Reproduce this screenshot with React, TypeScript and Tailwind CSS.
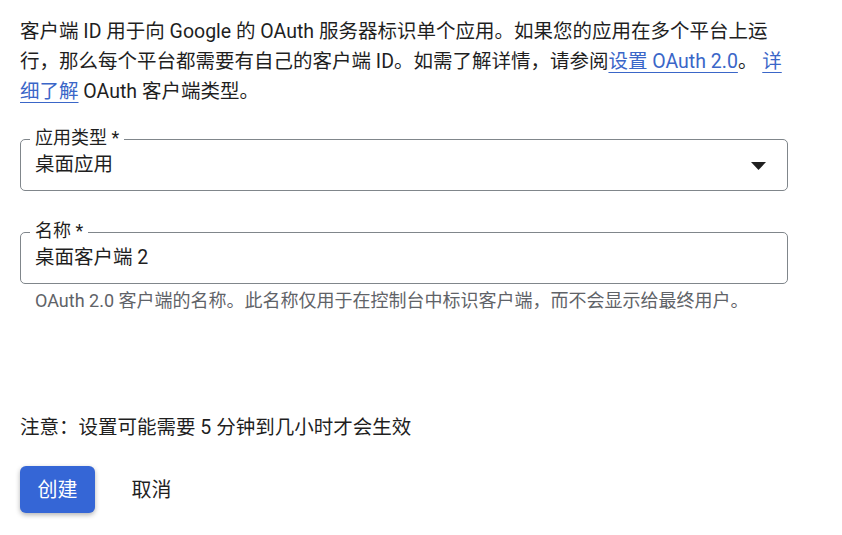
import React from "react";

const font = { fontFamily: 'Roboto, "Noto Sans CJK SC", sans-serif' };

function Field({ label, value, select }: { label: string; value: string; select?: boolean }) {
  return (
    <div className="relative h-[52px] w-[768px] rounded-[5px] border border-[#80868b] flex items-center pl-[14px] pr-[21px]">
      <span className="absolute left-[9px] top-[-14px] bg-white px-[5px] text-[18px] leading-[24px] text-[#1f1f1f]">
        {label}
      </span>
      <span className="flex-1 text-[19.5px] leading-[26px] text-[#1f1f1f]">{value}</span>
      {select && (
        <svg width="15" height="8" viewBox="0 0 15 8" className="mt-[1px]">
          <path d="M0 0 L15 0 L7.5 8 Z" fill="#1f1f1f" />
        </svg>
      )}
    </div>
  );
}

export default function App() {
  return (
    <div className="min-h-[535px] w-[842px] bg-white px-5" style={font}>
      <p className="pt-[17px] text-[19.5px] leading-[30px] text-[#1f1f1f] whitespace-nowrap">
        客户端 ID 用于向 Google 的 OAuth 服务器标识单个应用。如果您的应用在多个平台上运
        <br />
        行，那么每个平台都需要有自己的客户端 ID。如需了解详情，请参阅
        <a className="text-[#3a66c8] underline underline-offset-[4px] decoration-1">设置 OAuth 2.0</a>。{" "}
        <a className="text-[#3a66c8] underline underline-offset-[4px] decoration-1">详</a>
        <br />
        <a className="text-[#3a66c8] underline underline-offset-[4px] decoration-1">细了解</a> OAuth 客户端类型。
      </p>

      <div className="mt-[32px]">
        <Field label="应用类型 *" value="桌面应用" select />
      </div>

      <div className="mt-[41px]">
        <Field label="名称 *" value="桌面客户端 2" />
      </div>
      <p className="mt-[5px] pl-[15px] text-[18px] leading-[24px] text-[#5f6368]">
        OAuth 2.0 客户端的名称。此名称仅用于在控制台中标识客户端，而不会显示给最终用户。
      </p>

      <p className="mt-[100px] text-[19.5px] leading-[30px] text-[#1f1f1f]">
        注意：设置可能需要 5 分钟到几小时才会生效
      </p>

      <div className="mt-[23px] flex items-center gap-[19px]">
        <button className="h-[47px] w-[75px] rounded-[6px] bg-[#3566d6] text-[20px] text-white shadow-[0_2px_5px_rgba(0,0,0,0.3)]">
          创建
        </button>
        <button className="h-[47px] w-[75px] rounded-[6px] text-[20px] text-[#1f1f1f]">取消</button>
      </div>
    </div>
  );
}
